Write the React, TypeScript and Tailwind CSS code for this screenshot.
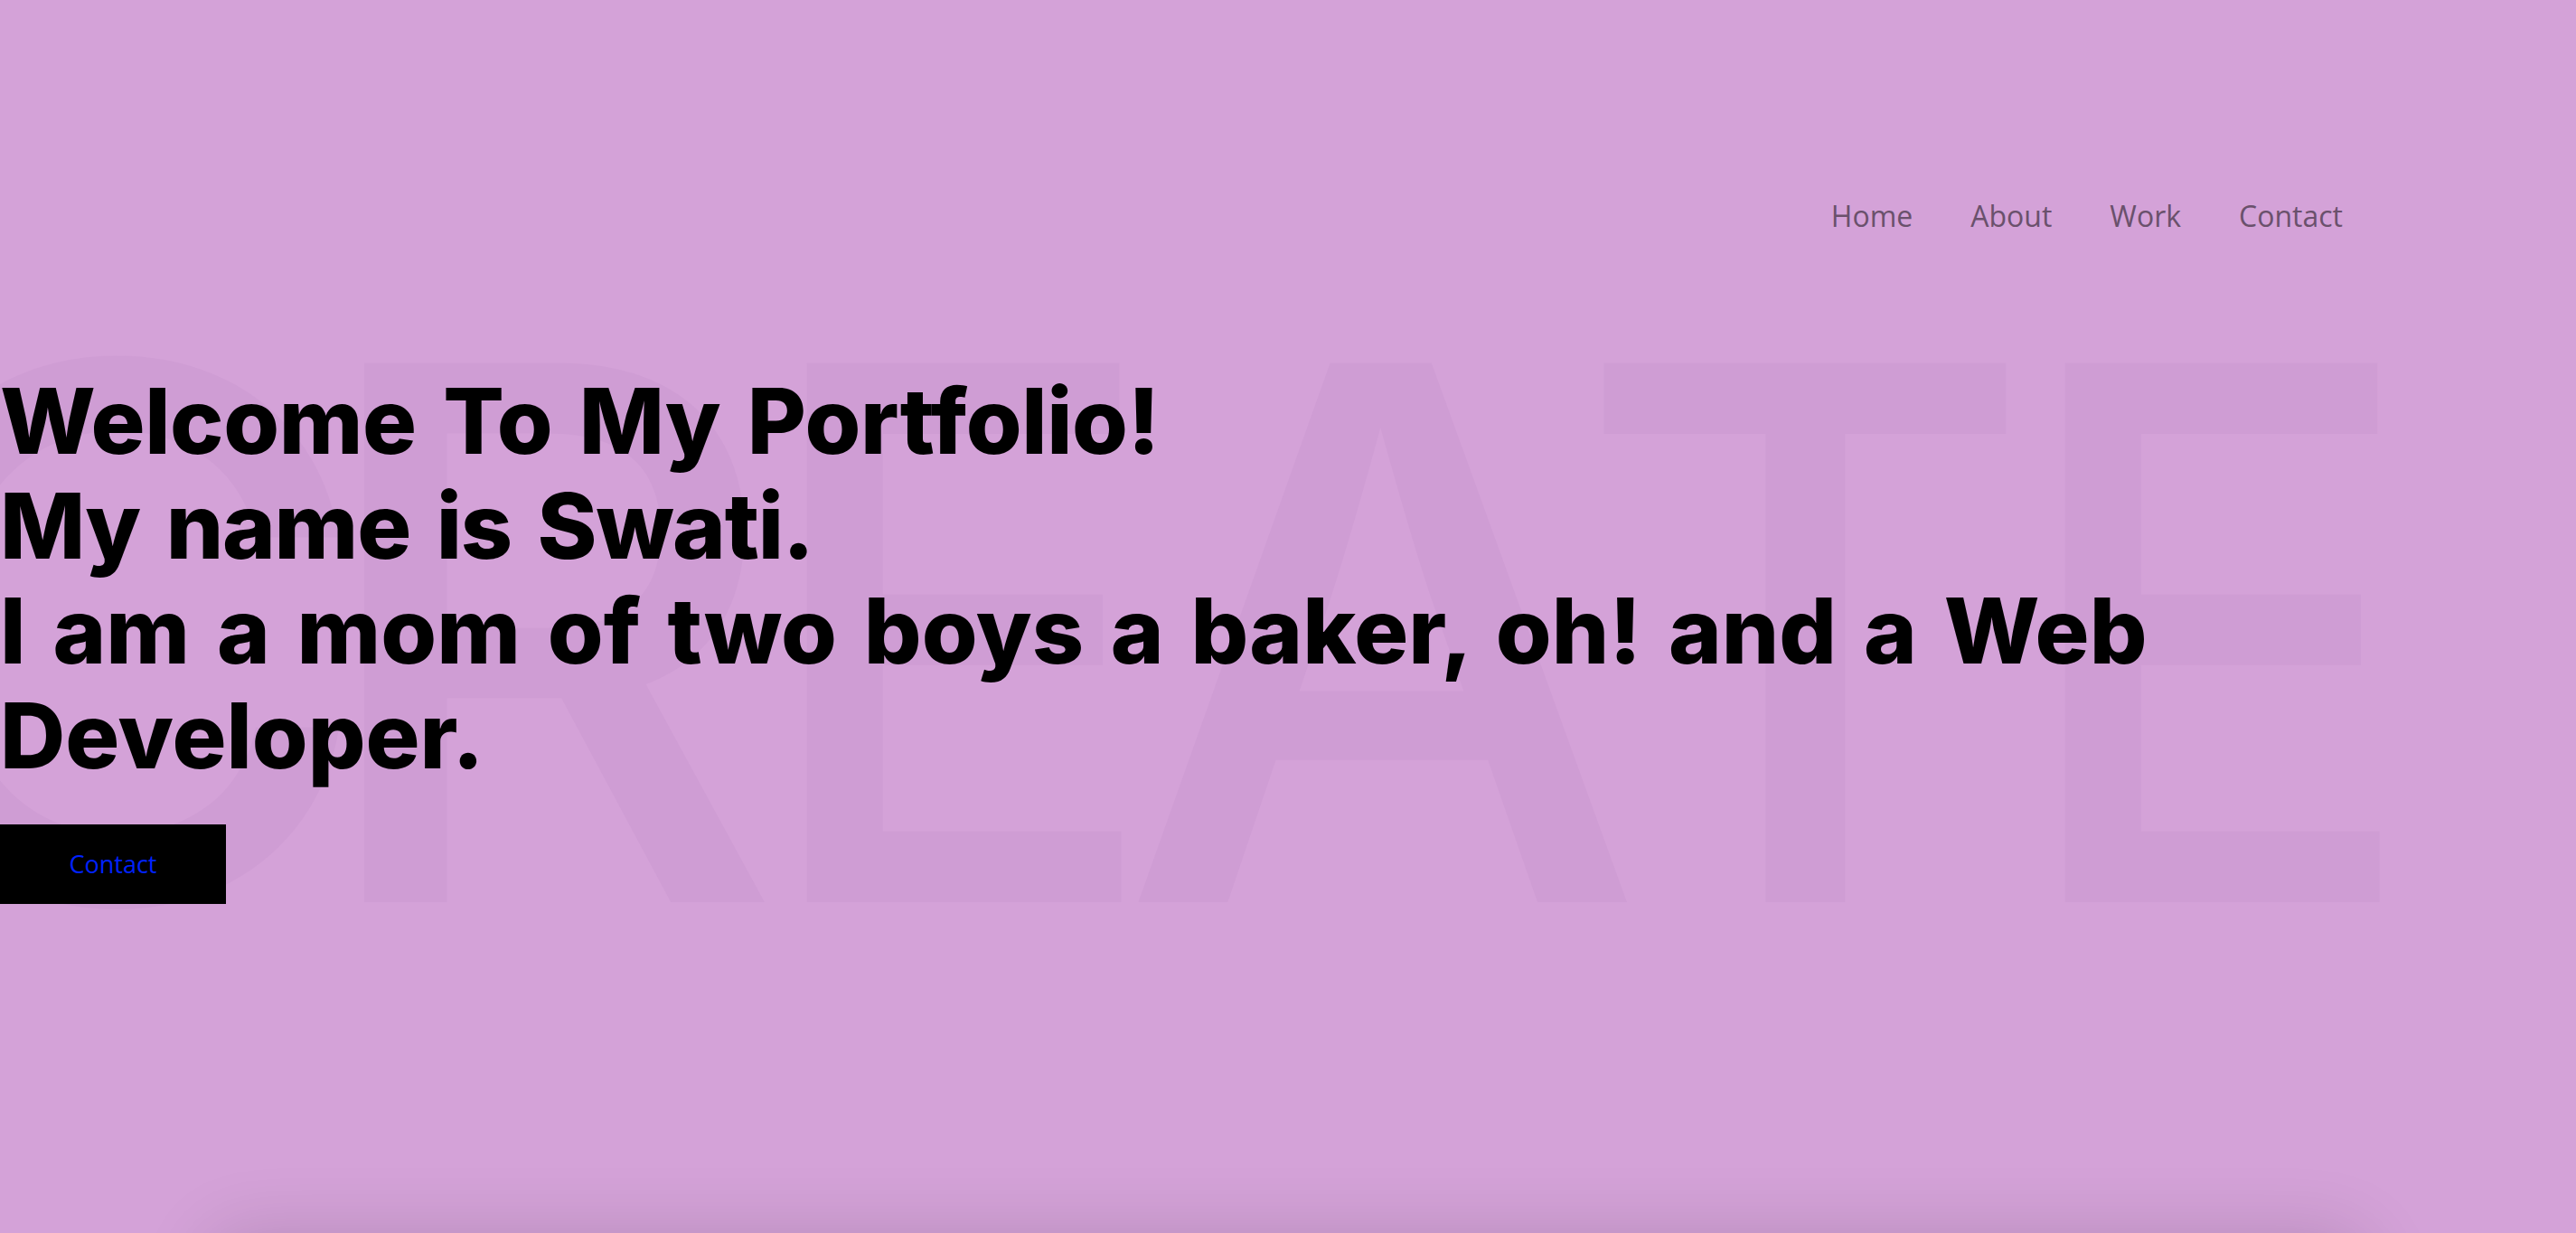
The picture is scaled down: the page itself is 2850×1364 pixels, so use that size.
import React from "react";

const navItems = ["Home", "About", "Work", "Contact"];

export default function App() {
  return (
    <div className="relative flex h-[1364px] w-full flex-col overflow-hidden bg-[#d4a2d8]">
      {/* big decorative word behind the content */}
      <div
        aria-hidden="true"
        className="pointer-events-none absolute left-0 top-[290px] flex select-none text-[820px] font-medium leading-none text-[#cf9dd4] [font-family:Inter,'Liberation_Sans',sans-serif]"
      >
        <span className="ml-[-185px] w-[522px]">C</span>
        <span className="w-[495px]">R</span>
        <span className="inline-block w-[407px] origin-left scale-x-[0.92]">E</span>
        <span className="w-[501px]">A</span>
        <span className="inline-block w-[484px] origin-left scale-x-[0.96]">T</span>
        <span className="inline-block origin-left scale-x-[0.92]">E</span>
      </div>

      <header className="relative flex h-[1364px] shrink-0 flex-col">
        <nav className="flex justify-end gap-[64px] pr-[258px] pt-[217px] text-[32px] leading-[44px] text-[#6a516c] [font-family:'Open_Sans',sans-serif]">
          {navItems.map((item) => (
            <a key={item} href="#" className="block">
              {item}
            </a>
          ))}
        </nav>

        <h1 className="mt-[147px] text-[100px] font-extrabold leading-[116px] tracking-[0px] [word-spacing:8px] text-black [font-family:Inter,'Liberation_Sans',sans-serif]">
          <span className="tracking-[-0.4px]">Welcome To My Portfolio!</span>
          <br />
          <span className="tracking-[-1.2px]">My name is Swati.</span>
          <br />
          I am a mom of two boys a baker, oh! and a Web
          <br />
          Developer.
        </h1>

        <div className="mt-[40px]">
          <a
            href="#"
            className="flex h-[88px] w-[250px] items-center justify-center bg-black text-[27px] text-[#0022ff] [font-family:'Open_Sans',sans-serif]"
          >
            Contact
          </a>
        </div>
      </header>

      <section className="relative mx-[230px] h-[400px] shrink-0 rounded-[40px] bg-[#d4a2d8] shadow-[0_0_80px_rgba(0,0,0,0.14)]" />
    </div>
  );
}
